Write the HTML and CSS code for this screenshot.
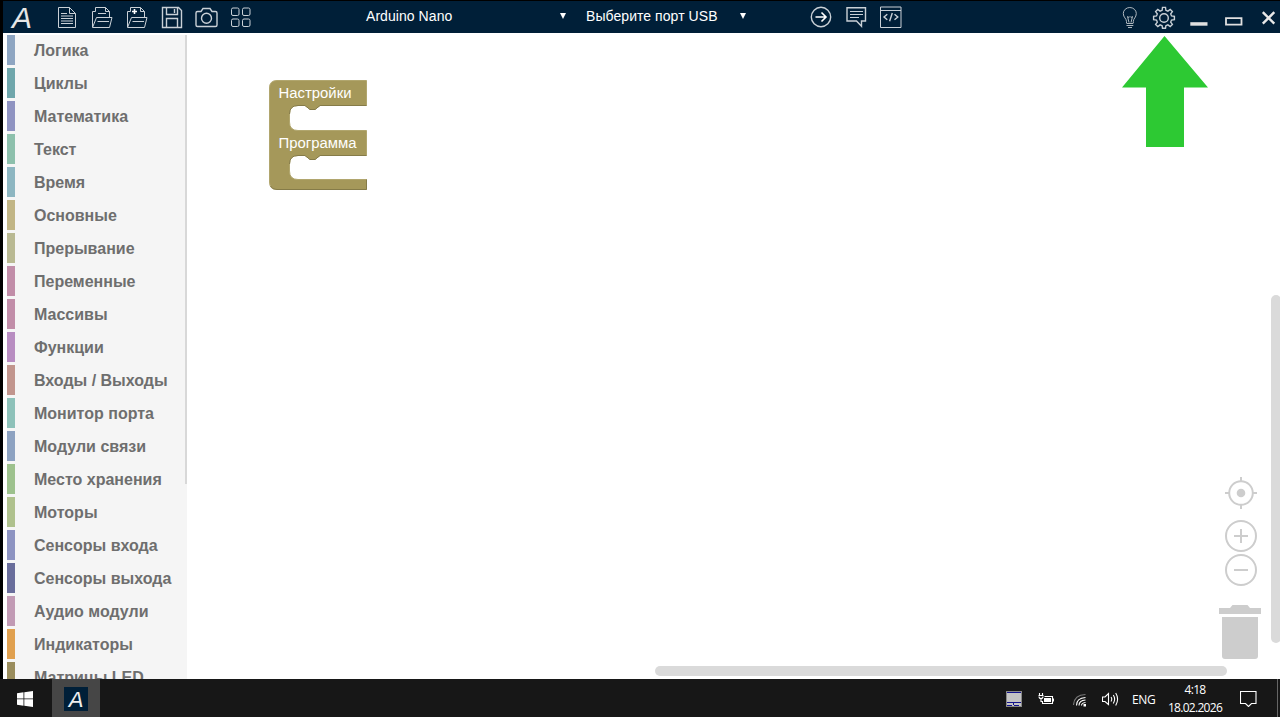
FILE: index.html
```
<!DOCTYPE html>
<html lang="ru">
<head>
    <meta charset="UTF-8">
    <meta name="viewport" content="width=device-width, initial-scale=1.0">
    <title>Arduino Nano</title>
    <link rel="stylesheet" href="styles.css">
</head>
<body>

<div class="app">
    <header class="toolbar">
        <div class="logo">A</div>
        <svg class="tool" viewBox="0 0 35 32"><path d="M9.5 6.5H20.5L26.5 12.5V26.5H9.5ZM20.5 6.5V12.5H26.5M12 12.5H18M12 15H24M12 17.5H24M12 20H24M12 22.5H24"/></svg>
        <svg class="tool" viewBox="0 0 35 32"><path d="M8.5 26V10.5H11.5V6.5H21.5L25.5 10.5V16.5M21.5 6.5V10.5H25.5M14 12.5H22M8.5 26.5L12.5 16.5H28L25.5 26.5ZM13.5 20.5H25"/></svg>
        <svg class="tool" viewBox="0 0 35 32"><path d="M8.5 26V10.5H11.5V6.5H21.5L25.5 10.5V16.5M21.5 6.5V10.5H25.5M8.5 26.5L12.5 16.5H28L25.5 26.5ZM13.5 20.5H25"/><path class="thick" d="M13 10.5H18M15.5 8V13"/></svg>
        <svg class="tool" viewBox="0 0 35 32"><path class="mid" d="M8.5 6.5H24.5L27.5 9.5V26.5H8.5ZM12.5 6.5V13.5H23.5V6.5M20.5 8V12M12.5 26.5V17.5H23.5V26.5"/></svg>
        <svg class="tool" viewBox="0 0 35 32"><path class="mid" d="M8.5 10.5H12L14 7.5H21L23 10.5H26.5Q28 10.5 28 12V24Q28 25.5 26.5 25.5H8.5Q7 25.5 7 24V12Q7 10.5 8.5 10.5Z"/><circle class="mid" cx="17.5" cy="17.3" r="5"/></svg>
        <svg class="tool" viewBox="0 0 35 32"><rect x="7.5" y="7" width="7.5" height="7.5" rx="1.5"/><rect x="18.5" y="7" width="7.5" height="7.5" rx="1.5"/><rect x="7.5" y="18" width="7.5" height="7.5" rx="1.5"/><rect x="18.5" y="18" width="7.5" height="7.5" rx="1.5"/></svg>

        <div class="picker board"><span>Arduino Nano</span><i></i></div>
        <div class="picker port"><span>Выберите порт USB</span><i></i></div>

        <svg class="tool" viewBox="0 0 35 32"><circle class="mid" cx="17" cy="16" r="9.7"/><path class="thick" d="M11.5 16H22M17.5 11.5L22 16L17.5 20.5"/></svg>
        <svg class="tool" viewBox="0 0 35 32"><path class="mid" d="M8 6.7H26.5V20H22.5V25.3L17.5 20H8Z"/><path d="M11 10.5H24M11 13.5H24M11 16.5H20"/></svg>
        <svg class="tool" viewBox="0 0 35 32"><path d="M6.5 6H27V26.5H6.5ZM6.5 9.5H27"/><path class="mid" d="M13.3 13.2L10 16L13.3 18.8M20.5 13.2L23.8 16L20.5 18.8M18.3 12L15.6 20.3"/></svg>

        <div class="window-tools">
            <svg class="tool" viewBox="0 0 35 32"><path class="dim" d="M14.5 22V20.5C14.5 17.5 11.3 16.5 11.3 12.5A6.5 6 0 0 1 24.3 12.5C24.3 16.5 21.3 17.5 21.3 20.5V22M14.5 22.5H21.3M14.5 24.5H21.3M16 26.5H20M17 21.5L15.5 15.5L17 16.5L18 15.5L19 16.5L20.5 15.5L19 21.5"/></svg>
            <svg class="tool" viewBox="0 0 35 32"><path class="mid" d="M15.1 9.3L15.5 6.4H18.5L18.9 9.3L20.9 10.1L23.2 8.4L25.4 10.6L23.7 12.9L24.5 14.9L27.4 15.3V18.7L24.5 19.1L23.7 21.1L25.4 23.4L23.2 25.6L20.9 23.9L18.9 24.7L18.5 27.2H15.5L15.1 24.7L13.1 23.9L10.8 25.6L8.6 23.4L10.3 21.1L9.5 19.1L6.6 18.7V15.3L9.5 14.9L10.3 12.9L8.6 10.6L10.8 8.4L13.1 10.1Z"/><circle class="mid" cx="17" cy="17" r="4.3"/></svg>
            <svg class="tool" viewBox="0 0 35 32"><path class="fill" d="M8.3 21.2H25.5V24.7H8.3Z"/></svg>
            <svg class="tool" viewBox="0 0 35 32"><path class="bold" d="M9 17.2H24.5V23.7H9Z"/></svg>
            <svg class="tool" viewBox="0 0 35 32"><path class="cross" d="M10.8 11.2L22.3 22.7M22.3 11.2L10.8 22.7"/></svg>
        </div>
    </header>

    <main class="main">
        <nav class="toolbox">
            <div class="category logic">Логика</div>
            <div class="category loops">Циклы</div>
            <div class="category math">Математика</div>
            <div class="category text">Текст</div>
            <div class="category time">Время</div>
            <div class="category basic">Основные</div>
            <div class="category interrupt">Прерывание</div>
            <div class="category vars">Переменные</div>
            <div class="category arrays">Массивы</div>
            <div class="category funcs">Функции</div>
            <div class="category io">Входы / Выходы</div>
            <div class="category serial">Монитор порта</div>
            <div class="category comm">Модули связи</div>
            <div class="category storage">Место хранения</div>
            <div class="category motors">Моторы</div>
            <div class="category sensors-in">Сенсоры входа</div>
            <div class="category sensors-out">Сенсоры выхода</div>
            <div class="category audio">Аудио модули</div>
            <div class="category indicators">Индикаторы</div>
            <div class="category matrix">Матрицы LED</div>
            <div class="toolbox-scroll"></div>
        </nav>

        <section class="workspace">
            <svg class="block" viewBox="0 0 98 110">
                <path class="block-body" d="M8 .5H97.5V25.5H51L46 29.5H41L36 25.5H29Q20.500 25.500 20.500 34V42Q20.500 50.500 29 50.500H97.500V75.500H51L46 79.500H41L36 75.500H29Q20.500 75.500 20.500 84V91Q20.500 99.500 29 99.500H97.500V109.500H8Q.5 109.500 .5 102V8Q.5 .5 8 .5Z"/>
                <path class="block-dark" d="M97.500 25.500H51L46 29.500H41L36 25.500H29Q20.500 25.500 20.500 34M97.500 75.500H51L46 79.500H41L36 75.500H29Q20.500 75.500 20.500 84M97.500 99.500V109.500H8Q3 109.500 1.500 106"/>
                <text x="9.500" y="18" textLength="73" lengthAdjust="spacingAndGlyphs">Настройки</text>
                <text x="9.500" y="68" textLength="78" lengthAdjust="spacingAndGlyphs">Программа</text>
            </svg>

            <svg class="pointer" viewBox="0 0 86 111"><path d="M42.500 0L86 51.500H62V111H24V51.500H0Z"/></svg>

            <div class="controls">
                <svg class="center" viewBox="0 0 34 34"><circle cx="17" cy="17" r="11.800"/><circle class="dot" cx="17" cy="17" r="4.300"/><path d="M17 1V5M17 29V33M1 17H5M29 17H33"/></svg>
                <svg class="zoom" viewBox="0 0 34 34"><circle cx="17" cy="17" r="15"/><path d="M10 17H24M17 10V24"/></svg>
                <svg class="zoom" viewBox="0 0 34 34"><circle cx="17" cy="17" r="15"/><path d="M10 17H24"/></svg>
                <svg class="trash" viewBox="0 0 42 54"><path d="M0 3H11L13.500 0H28.500L31 3H42V9H0ZM3 12H39V51Q39 54 36 54H6Q3 54 3 51Z"/></svg>
            </div>
            <div class="scroll-v"></div>
            <div class="scroll-h"></div>
        </section>
    </main>
</div>

<footer class="taskbar">
    <div class="start">
        <svg width="16" height="16" viewBox="0 0 16 16"><path d="M0 2.300L6.500 1.300V7.500H0ZM7.300 1.200L16 0V7.500H7.300ZM0 8.300H6.500V14.700L0 13.700ZM7.300 8.300H16V16L7.300 14.800Z"/></svg>
    </div>
    <div class="task"><span>A</span></div>
    <div class="tray">
        <svg class="pc" viewBox="0 0 16 16"><path fill="#888" d="M0 0H16V16H0Z"/><path fill="#14148c" d="M1 1H15V2H1Z"/><path fill="#c4c4c4" d="M1 2H15V11H1ZM1 12H15V15H1Z"/><path fill="#14148c" d="M1 11H15V12H1ZM1 14H6V15H1ZM8 14H13V15H8ZM7 12H8V14H7Z"/></svg>
        <svg class="battery" viewBox="0 0 16 14"><path d="M4.500 9.500V11.500H14.500V4.500H6.500M15.500 6.500V9.500M1.500 1V3M4.500 1V3M.5 3.500H5.500M1 4.500Q1 6.500 3 6.500Q5 6.500 5 4.500M3 6.500V9.500H5"/><path class="solid" d="M6 6H13V10H6Z"/></svg>
        <svg class="wifi" viewBox="0 0 14 14"><path class="faint" d="M.5 12Q1 2 12.500 1.500"/><path d="M3.500 12.500Q3.500 5 12.500 4.500M6 12.500Q6 7.500 12.500 7M8.500 12.500Q8.500 10 12.500 9.500"/><path class="solid" d="M10.500 11H13V13.500H10.500Z"/></svg>
        <svg class="volume" viewBox="0 0 18 14"><path d="M.5 5V9.500H3L6.500 12.500V1.500L3 5ZM9 5Q10.500 7 9 9.500M11.300 3Q14 7 11.300 11.500M13.700 1Q17.500 7 13.700 13.500"/></svg>
        <span class="lang">ENG</span>
        <div class="clock">
            <span class="hour">4:18</span>
            <span class="date">18.02.2026</span>
        </div>
        <svg class="notice" viewBox="0 0 17 16"><path d="M.5 .5H16V12.500H11.500L8.500 15.500L5.500 12.500H.5Z"/></svg>
        <div class="desktop"></div>
    </div>
</footer>

</body>
</html>
```
FILE: styles.css
```
* {
    box-sizing: border-box;
}
body {
    margin: 0;
    width: 1280px;
    height: 717px;
    overflow: hidden;
    display: flex;
    flex-direction: column;
    font-family: "Liberation Sans", Arial, sans-serif;
    background-color: #fff;
}
svg {
    display: block;
    flex: none;
}
.app {
    height: 679px;
    display: flex;
    flex-direction: column;
    border-left: 3px solid #000;
    border-top: 1px solid #000;
}

/* toolbar */
.toolbar {
    flex: none;
    height: 32px;
    display: flex;
    background-color: #001f38;
    color: #fff;
}
.logo {
    flex: none;
    width: 46px;
    padding-left: 9px;
    font-size: 30px;
    line-height: 33px;
    font-style: italic;
    color: #e6e6e6;
}
.tool {
    width: 35px;
    height: 32px;
    fill: none;
    stroke: #c9d0d6;
    stroke-width: 1;
}
.mid {
    stroke-width: 1.4;
}
.thick {
    stroke: #fff;
    stroke-width: 1.6;
}
.dim {
    stroke: #aeb7be;
}
.fill {
    fill: #e0e0e0;
    stroke: none;
}
.bold {
    stroke: #e0e0e0;
    stroke-width: 1.8;
}
.cross {
    stroke: #e8e8e8;
    stroke-width: 2.4;
}
.picker {
    flex: none;
    display: flex;
    align-items: center;
    justify-content: space-between;
    height: 30px;
    font-size: 14px;
    letter-spacing: 0.06px;
    white-space: nowrap;
}
.picker i {
    border: 3px solid transparent;
    border-top: 6px solid #fff;
    border-bottom: 0;
}
.board {
    width: 200px;
    margin-left: 107px;
}
.port {
    width: 160px;
    margin-left: 20px;
    margin-right: 58px;
}
.window-tools {
    flex: none;
    display: flex;
    width: 168px;
    margin-left: 203px;
    overflow: hidden;
}

/* categories */
.main {
    flex: 1;
    min-height: 0;
    display: flex;
}
.toolbox {
    position: relative;
    width: 180px;
    margin: 2px 0 0 4px;
    overflow: hidden;
    background-color: #f5f5f5;
}
.category {
    height: 30px;
    margin-bottom: 3px;
    padding-left: 19px;
    border-left: 8px solid #8ea5c1;
    font-size: 16px;
    font-weight: bold;
    line-height: 31px;
    white-space: nowrap;
    color: #6e6e6e;
}
.loops { border-color: #6fa6ab; }
.math { border-color: #8f93c1; }
.text { border-color: #8dc0ac; }
.time { border-color: #8db6c1; }
.basic { border-color: #c1b585; }
.interrupt { border-color: #b9b992; }
.vars { border-color: #c18da8; }
.arrays { border-color: #c18da8; }
.funcs { border-color: #b88dc1; }
.io { border-color: #c1958d; }
.serial { border-color: #8dc1b9; }
.comm { border-color: #8da2c1; }
.storage { border-color: #9dc18d; }
.motors { border-color: #afc18d; }
.sensors-in { border-color: #8d93c1; }
.sensors-out { border-color: #696d9b; }
.audio { border-color: #c19ab4; }
.indicators { border-color: #e0a04f; }
.matrix { border-color: #9a8d5d; }
.toolbox-scroll {
    position: absolute;
    top: 0;
    right: 0;
    width: 2px;
    height: 449px;
    background-color: #d8d8d8;
}

/* workspace */
.workspace {
    position: relative;
    flex: 1;
}
.block {
    position: absolute;
    left: 82px;
    top: 47px;
    width: 98px;
    height: 110px;
}
.block-body {
    fill: #a5985a;
    stroke: #b1a66e;
}
.block-dark {
    fill: none;
    stroke: #857b48;
}
.block text {
    fill: #fff;
    font-size: 14.67px;
}
.pointer {
    position: absolute;
    left: 935px;
    top: 3px;
    width: 86px;
    height: 111px;
    fill: #2dc933;
}
.controls {
    position: absolute;
    right: 19px;
    bottom: 20px;
    width: 42px;
    display: flex;
    flex-direction: column;
    align-items: center;
    fill: none;
    stroke: #cdcdcd;
    stroke-width: 2;
}
.center {
    width: 34px;
    height: 34px;
    margin: 0 0 9px 2px;
}
.zoom {
    width: 34px;
    height: 34px;
    margin-left: 2px;
}
.dot {
    fill: #cdcdcd;
    stroke: none;
}
.trash {
    width: 42px;
    height: 54px;
    margin-top: 18px;
    fill: #cdcdcd;
    stroke: none;
}
.scroll-v,
.scroll-h {
    position: absolute;
    border-radius: 5px;
    background-color: #dadada;
}
.scroll-v {
    right: -1px;
    top: 262px;
    width: 10px;
    height: 348px;
}
.scroll-h {
    left: 468px;
    bottom: 3px;
    width: 572px;
    height: 10px;
}

/* windows taskbar */
.taskbar {
    height: 38px;
    display: flex;
    background-color: #171717;
    color: #fff;
}
.start {
    width: 52px;
    padding: 12px 0 0 17px;
    fill: #fff;
}
.task {
    width: 48px;
    padding: 8px 12px 0;
    background-color: #464646;
}
.task span {
    display: block;
    height: 24px;
    background-color: #001f38;
    text-align: center;
    font-size: 22px;
    font-style: italic;
    line-height: 25px;
    color: #eee;
}
.tray {
    flex: 1;
    display: flex;
    justify-content: flex-end;
    align-items: center;
    padding-top: 2px;
    font-family: "Open Sans", "Noto Sans", sans-serif;
    font-size: 12px;
    fill: none;
    stroke: #fff;
    stroke-width: 1.1;
}
.pc {
    width: 16px;
    height: 16px;
    stroke: none;
}
.battery {
    width: 16px;
    height: 14px;
    margin-left: 16px;
}
.wifi {
    width: 14px;
    height: 14px;
    margin: 2px 0 0 19px;
}
.volume {
    width: 18px;
    height: 14px;
    margin-left: 15px;
}
.solid {
    fill: #fff;
    stroke: none;
}
.faint {
    stroke: #777;
}
.lang {
    width: 24px;
    margin-left: 12px;
    letter-spacing: -0.4px;
}
.clock {
    width: 56px;
    margin-left: 11px;
    display: flex;
    flex-direction: column;
    align-items: center;
    line-height: 18px;
    letter-spacing: -0.7px;
}
.notice {
    width: 17px;
    height: 16px;
    margin-left: 17px;
}
.desktop {
    width: 3px;
    height: 38px;
    margin: -2px 0 0 20px;
    border-left: 1px solid #666;
}
```
